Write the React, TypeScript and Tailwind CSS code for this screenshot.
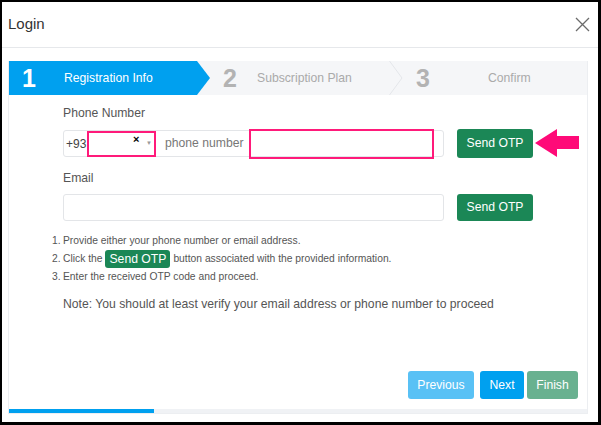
import { useState } from "react";

const font = { fontFamily: '"Liberation Sans", Arial, sans-serif' };

function StepArrow() {
  return (
    <svg width="13" height="34" viewBox="0 0 13 34" className="block shrink-0" aria-hidden="true">
      <polygon points="0,0 13,17 0,34" fill="#00a0ef" />
    </svg>
  );
}

function Chevron() {
  return (
    <svg width="14" height="34" viewBox="0 0 14 34" className="block shrink-0" aria-hidden="true">
      <polyline points="0.5,0 13,17 0.5,34" fill="none" stroke="#e4e6ea" strokeWidth="1" />
    </svg>
  );
}

function PinkArrow() {
  return (
    <svg width="46" height="28" viewBox="0 0 46 28" className="block shrink-0" aria-hidden="true">
      <polygon points="0,14 22,0 22,7 44,7 44,20 22,20 22,28" fill="#ff0a78" />
    </svg>
  );
}

export default function App() {
  const [phone, setPhone] = useState("");
  const [email, setEmail] = useState("");

  return (
    <div
      className="w-[601px] h-[425px] bg-white border-black border-l-2 border-t-2 border-r-[3px] border-b-[3px] flex flex-col overflow-hidden"
      style={font}
    >
      {/* Modal header */}
      <div className="h-[46px] shrink-0 flex items-center justify-between pl-[6px] pr-[8px] border-b border-[#e6e8eb]">
        <span className="text-[15px] text-[#333]">Login</span>
        <button type="button" aria-label="Close" className="w-[15px] h-[15px] -mt-[1px]">
          <svg width="15" height="15" viewBox="0 0 15 15" aria-hidden="true">
            <path d="M1 1 L14 14 M14 1 L1 14" stroke="#6b6b6b" strokeWidth="1.3" />
          </svg>
        </button>
      </div>

      {/* Body */}
      <div className="pt-[13px] pl-[6px] pr-[10px]">
        <div className="border-l border-r border-b border-[#eceef1] flex flex-col h-[353px]">
          {/* Step nav */}
          <div className="h-[34px] shrink-0 flex items-center bg-[#f5f6f8] text-[12.2px]">
            <div className="h-full w-[188px] bg-[#00a0ef] flex items-center">
              <span className="w-[55px] pl-[13px] text-[25px] font-bold text-white leading-none">1</span>
              <span className="text-white">Registration Info</span>
            </div>
            <StepArrow />
            <span className="ml-[13px] w-[34px] text-[25px] font-bold text-[#b3b3b3] leading-none">2</span>
            <span className="w-[132px] text-[#aaaaaa]">Subscription Plan</span>
            <Chevron />
            <span className="ml-[13px] w-[72px] text-[25px] font-bold text-[#b3b3b3] leading-none">3</span>
            <span className="text-[#aaaaaa]">Confirm</span>
          </div>

          {/* Form content */}
          <div className="flex-1 flex flex-col pl-[54px] pt-[10px] text-[#555]">
            <label className="text-[12.2px] leading-[16px] mb-[7px]">Phone Number</label>
            <div className="flex items-center h-[30px]">
              <div className="w-[381px] h-[27px] mt-[1px] border border-[#e3e5e8] rounded-[3px] flex items-center">
                <span className="pl-[2px] w-[23px] text-[12px] text-[#444]">+93</span>
                <div className="relative w-[69px] h-[26px] border-2 border-[#ff1a7a]">
                  <span className="absolute left-[44px] top-[1px] text-[11px] font-bold text-black leading-none">×</span>
                  <span className="absolute left-[57px] top-[7px] text-[6px] text-[#999] leading-none">▼</span>
                </div>
                <span className="pl-[9px] w-[93px] text-[12.2px] text-[#777]">phone number</span>
                <input
                  value={phone}
                  onChange={(e) => setPhone(e.target.value)}
                  className="w-[185px] h-[30px] border-2 border-[#ff1a7a] outline-none px-2 text-[12px]"
                />
              </div>
              <button
                type="button"
                className="ml-[13px] w-[76px] h-[29px] rounded-[3px] bg-[#1b8756] text-white text-[12.2px]"
              >
                Send OTP
              </button>
              <div className="ml-[2px]">
                <PinkArrow />
              </div>
            </div>

            <label className="text-[12.2px] leading-[16px] mt-[12px] mb-[8px]">Email</label>
            <div className="flex items-center">
              <input
                value={email}
                onChange={(e) => setEmail(e.target.value)}
                className="w-[381px] h-[27px] border border-[#e3e5e8] rounded-[3px] outline-none px-2 text-[12px]"
              />
              <button
                type="button"
                className="ml-[13px] w-[76px] h-[27px] rounded-[3px] bg-[#1b8756] text-white text-[12.2px]"
              >
                Send OTP
              </button>
            </div>

            <div className="mt-[11px] -ml-[11px] text-[10.3px] leading-[17.5px] text-[#555]">
              <div className="flex">
                <span className="w-[11px]">1.</span>
                <span>Provide either your phone number or email address.</span>
              </div>
              <div className="flex items-center">
                <span className="w-[11px]">2.</span>
                <span>Click the</span>
                <span className="mx-[3px] px-[4px] h-[18px] leading-[18px] rounded-[3px] bg-[#1b8756] text-white text-[12.2px]">
                  Send OTP
                </span>
                <span>button associated with the provided information.</span>
              </div>
              <div className="flex">
                <span className="w-[11px]">3.</span>
                <span>Enter the received OTP code and proceed.</span>
              </div>
            </div>

            <p className="mt-[11px] text-[12.2px] leading-[16px] text-[#555]">
              Note: You should at least verify your email address or phone number to proceed
            </p>

            <div className="mt-auto mb-[10px] mr-[9px] flex justify-end text-[12.2px] text-white">
              <button type="button" disabled className="w-[66px] h-[28px] rounded-[3px] bg-[#59c1f5]">
                Previous
              </button>
              <button type="button" className="ml-[6px] w-[44px] h-[28px] rounded-[3px] bg-[#00a0ef]">
                Next
              </button>
              <button type="button" disabled className="ml-[3px] w-[51px] h-[28px] rounded-[3px] bg-[#69b190]">
                Finish
              </button>
            </div>
          </div>

          {/* Progress */}
          <div className="h-[4px] shrink-0 bg-[#f0f2f5]">
            <div className="h-full w-1/4 bg-[#00a0ef]" />
          </div>
        </div>
      </div>
    </div>
  );
}
